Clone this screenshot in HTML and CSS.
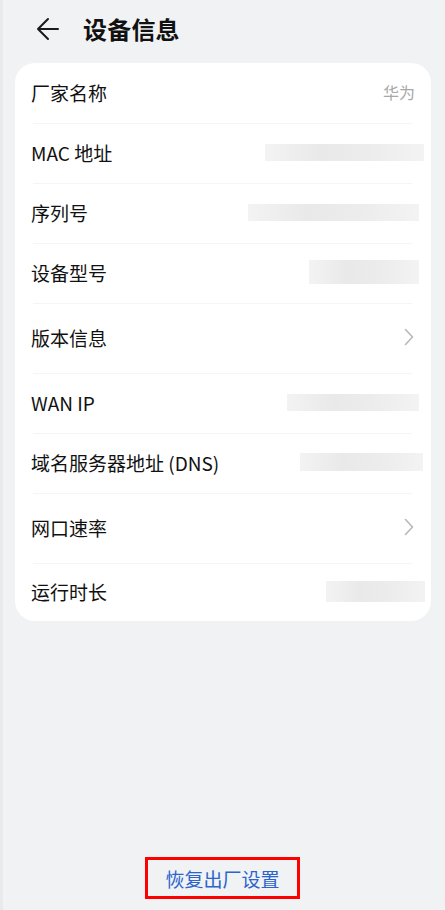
FILE: index.html
```html
<!DOCTYPE html>
<html lang="zh-CN">
<head>
  <meta charset="UTF-8" />
  <meta name="viewport" content="width=device-width, initial-scale=1.0"/>
  <title>设备信息</title>
  <link rel="stylesheet" href="styles.css">
</head>
<body>
  <div class="page">

    <!-- Title bar -->
    <header class="topbar">
      <svg class="back" width="24" height="24" viewBox="0 0 24 24">
        <path d="M22 12H2M12 2L2 12l10 10" fill="none" stroke="#1a1a1a" stroke-width="2" stroke-linecap="round" stroke-linejoin="round"/>
      </svg>
      <h1>设备信息</h1>
    </header>

    <!-- Info list -->
    <div class="card">
      <div class="row">
        <span class="label">厂家名称</span>
        <span class="value">华为</span>
      </div>
      <div class="row">
        <span class="label">MAC 地址</span>
        <span class="blur w-mac"></span>
      </div>
      <div class="row">
        <span class="label">序列号</span>
        <span class="blur w-sn"></span>
      </div>
      <div class="row">
        <span class="label">设备型号</span>
        <span class="blur w-model"></span>
      </div>
      <div class="row row-link">
        <span class="label">版本信息</span>
        <svg class="chevron" width="10" height="18" viewBox="0 0 10 18">
          <path d="M1.5 1.5L8.5 9l-7 7.5" fill="none" stroke="#b8b8b8" stroke-width="1.6" stroke-linecap="round" stroke-linejoin="round"/>
        </svg>
      </div>
      <div class="row">
        <span class="label">WAN IP</span>
        <span class="blur w-wan"></span>
      </div>
      <div class="row">
        <span class="label">域名服务器地址 (DNS)</span>
        <span class="blur w-dns"></span>
      </div>
      <div class="row row-link">
        <span class="label">网口速率</span>
        <svg class="chevron" width="10" height="18" viewBox="0 0 10 18">
          <path d="M1.5 1.5L8.5 9l-7 7.5" fill="none" stroke="#b8b8b8" stroke-width="1.6" stroke-linecap="round" stroke-linejoin="round"/>
        </svg>
      </div>
      <div class="row">
        <span class="label">运行时长</span>
        <span class="blur w-uptime"></span>
      </div>
    </div>

    <div class="spacer"></div>

    <div class="footer">
      <button class="reset">恢复出厂设置</button>
    </div>
  </div>
</body>
</html>
```

FILE: styles.css
```css
body {
  margin: 0;
  padding: 0;
  background: #f1f2f4;
  font-family: "Noto Sans CJK SC", "Noto Sans", sans-serif;
  color: #111;
}

.page {
  min-height: 910px;
  display: flex;
  flex-direction: column;
  border-left: 3px solid #e9eaec;
  box-sizing: border-box;
}

/* Title bar */
.topbar {
  height: 63px;
  display: flex;
  align-items: center;
  padding: 0 0 6px 33px;
  box-sizing: border-box;
}

.back {
  flex: none;
}

.topbar h1 {
  margin: 0 0 0 23px;
  font-size: 24px;
  font-weight: 700;
  letter-spacing: 0.2px;
}

/* Card */
.card {
  margin: 0 14px 0 12px;
  background: #fff;
  border-radius: 20px;
  padding-bottom: 0;
}

.row {
  height: 60px;
  display: flex;
  align-items: center;
  justify-content: space-between;
  padding: 0 12px 2px 16px;
  box-sizing: border-box;
  position: relative;
}

.row + .row::before {
  content: "";
  position: absolute;
  top: 0;
  left: 18px;
  right: 19px;
  height: 1px;
  background: #f5f5f5;
}

.row-link {
  height: 70px;
  padding-right: 17px;
}

.row:last-child {
  height: 58px;
}

.label {
  font-size: 19px;
  line-height: 1;
}

.value {
  font-size: 16px;
  color: #a8a8a8;
  margin-right: 4px;
}

/* Blurred-out values */
.blur {
  display: block;
  height: 17px;
  background: linear-gradient(90deg, #f3f3f3 0%, #e9e9e9 35%, #ececec 65%, #f3f3f3 100%);
}

.w-mac { width: 159px; margin-right: -5px; }
.w-sn { width: 171px; }
.w-model { width: 110px; height: 24px; }
.w-wan { width: 132px; }
.w-dns { width: 123px; height: 18px; margin-right: -4px; }
.w-uptime { width: 99px; height: 21px; margin-right: -6px; }

.spacer {
  flex: 1;
}

/* Bottom action */
.footer {
  display: flex;
  justify-content: center;
  padding-bottom: 11px;
}

.reset {
  width: 155px;
  height: 42px;
  border: 3px solid #ff0000;
  background: transparent;
  color: #2a64cc;
  font-family: inherit;
  font-size: 19px;
  padding: 0;
  margin-right: 3px;
  cursor: pointer;
}
```
